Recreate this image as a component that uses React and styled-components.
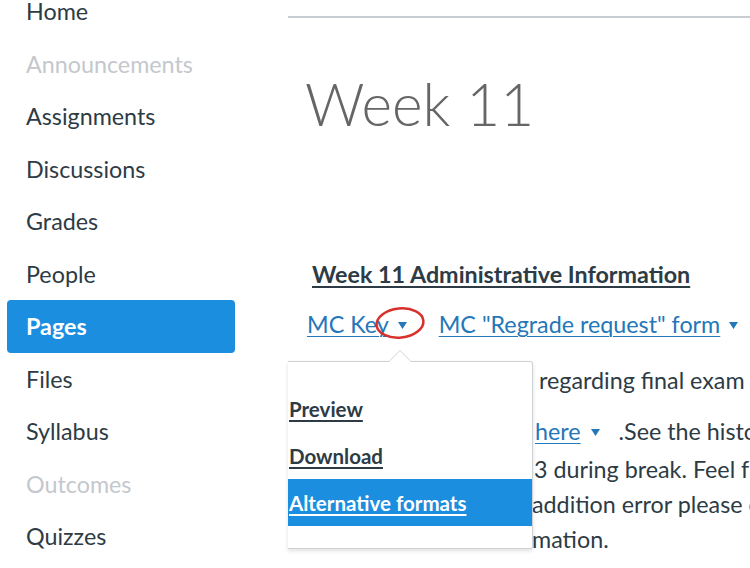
import React from 'react';
import styled, { createGlobalStyle } from 'styled-components';

const GlobalStyle = createGlobalStyle`
  html, body {
    margin: 0;
    padding: 0;
    background: #fff;
    overflow: hidden;
  }
  body {
    font-family: Lato, "Liberation Sans", sans-serif;
    color: #2d3b45;
  }
`;

const Layout = styled.div`
  display: flex;
  width: 750px;
  height: 568px;
  overflow: hidden;
`;

const Sidebar = styled.nav`
  flex: 0 0 288px;
  padding: 0 0 0 7px;
  box-sizing: border-box;
  margin-top: -15px;
`;

const NavList = styled.ul`
  list-style: none;
  margin: 0;
  padding: 0;
  width: 228px;
`;

const NavItem = styled.li`
  height: 52.5px;
  display: flex;
  align-items: center;
  padding-left: 19px;
  border-radius: 4px;
  font-size: 23.3px;
  color: ${(p) => (p.$active ? '#fff' : p.$muted ? '#c4c8cc' : '#2d3b45')};
  background: ${(p) => (p.$active ? '#1b8ee0' : 'transparent')};
  font-weight: ${(p) => (p.$active ? 700 : 400)};
`;

const Main = styled.main`
  flex: 1;
  min-width: 0;
  margin-top: 16px;
  border-top: 2px solid #c7cdd1;
  padding-left: 19px;
  position: relative;
`;

const Title = styled.h1`
  margin: 55px 0 0 -2px;
  font-size: 58.5px;
  line-height: 60px;
  font-weight: 300;
  color: #666;
`;

const SectionHeading = styled.h2`
  margin: 128px 0 0 5px;
  font-size: 23.3px;
  line-height: 26px;
  font-weight: 700;
  text-decoration: underline;
  text-underline-offset: 3px;
  color: #2d3b45;
`;

const LinkRow = styled.div`
  margin-top: 24px;
  display: flex;
  align-items: center;
  height: 26px;
  font-size: 23.3px;
  white-space: nowrap;
`;

const FileLink = styled.a`
  color: #2477b8;
  text-decoration: underline;
  text-underline-offset: 3px;
  text-decoration-thickness: 1px;
`;

const Caret = styled.svg`
  flex: none;
  width: 9px;
  height: 7px;
  margin: 2px ${(p) => p.$after || 0}px 0 ${(p) => p.$before || 9}px;
  fill: #2477b8;
`;

const Line = styled.div`
  display: flex;
  align-items: center;
  white-space: nowrap;
  font-size: 23.3px;
  line-height: 35px;
  padding-left: ${(p) => p.$indent}px;
  margin-top: ${(p) => p.$gap || 0}px;
`;

const Popup = styled.div`
  position: absolute;
  left: 0;
  top: 343px;
  width: 245px;
  height: 188px;
  box-sizing: border-box;
  padding: 23px 0;
  background: #fff;
  border: 1px solid #cdd2d6;
  border-left: none;
  border-radius: 0 3px 3px 0;
  box-shadow: 0 2px 4px rgba(0, 0, 0, 0.12);
  z-index: 2;

  &::before,
  &::after {
    content: '';
    position: absolute;
    left: 100px;
    border: 12px solid transparent;
    border-top: none;
  }
  &::before {
    top: -12px;
    border-bottom-color: #cdd2d6;
  }
  &::after {
    top: -11px;
    border-bottom-color: #fff;
  }
`;

const MenuItem = styled.div`
  height: 47px;
  display: flex;
  align-items: center;
  padding-left: 1px;
  font-size: 20.5px;
  font-weight: 700;
  text-decoration: underline;
  text-underline-offset: 3px;
  color: ${(p) => (p.$active ? '#fff' : '#2d3b45')};
  background: ${(p) => (p.$active ? '#1b8ee0' : 'transparent')};
`;

const Marker = styled.svg`
  position: absolute;
  left: 86px;
  top: 287px;
  width: 52px;
  height: 36px;
  overflow: visible;
  z-index: 3;
`;

const Body = styled.div`
  color: #2d3b45;
`;

const nav = [
  { label: 'Home' },
  { label: 'Announcements', muted: true },
  { label: 'Assignments' },
  { label: 'Discussions' },
  { label: 'Grades' },
  { label: 'People' },
  { label: 'Pages', active: true },
  { label: 'Files' },
  { label: 'Syllabus' },
  { label: 'Outcomes', muted: true },
  { label: 'Quizzes' },
];

const Tri = (props) => (
  <Caret viewBox="0 0 9 7" {...props}>
    <path d="M0 0h9L4.5 7z" />
  </Caret>
);

export default function App() {
  return (
    <>
      <GlobalStyle />
      <Layout>
        <Sidebar>
          <NavList>
            {nav.map((n) => (
              <NavItem key={n.label} $active={n.active} $muted={n.muted}>
                {n.label}
              </NavItem>
            ))}
          </NavList>
        </Sidebar>
        <Main>
          <Title>Week 11</Title>
          <SectionHeading>Week 11 Administrative Information</SectionHeading>
          <LinkRow>
            <FileLink>MC Key</FileLink>
            <Tri $after={32} />
            <FileLink>MC "Regrade request" form</FileLink>
            <Tri />
          </LinkRow>
          <Body>
            <Line $gap={26} $indent={232}>regarding final exam grades and review sessions.</Line>
            <Line $gap={16} $indent={228}>
              <FileLink>here</FileLink>
              <Tri $before={10} $after={19} />
              .See the histogram of scores
            </Line>
            <Line $gap={3} $indent={227}>3 during break. Feel free to stop by</Line>
            <Line $indent={225}>addition error please contact me</Line>
            <Line $indent={225}>mation.</Line>
          </Body>
          <Marker viewBox="0 0 52 36">
            <ellipse cx="26" cy="18" rx="23.5" ry="14.5" fill="none" stroke="#d8302b" strokeWidth="2.5" transform="rotate(-6 26 18)" />
          </Marker>
          <Popup>
            <MenuItem>Preview</MenuItem>
            <MenuItem>Download</MenuItem>
            <MenuItem $active>Alternative formats</MenuItem>
          </Popup>
        </Main>
      </Layout>
    </>
  );
}
